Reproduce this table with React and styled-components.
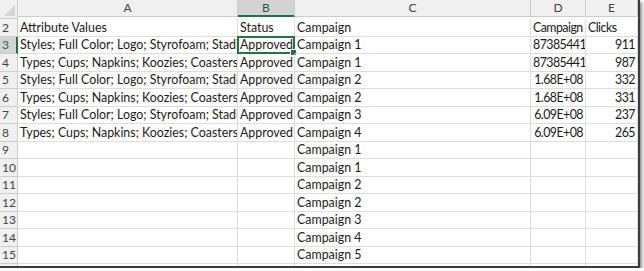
import React from "react";
import styled, { createGlobalStyle } from "styled-components";

const GlobalStyle = createGlobalStyle`
  html, body {
    margin: 0;
    padding: 0;
    background: #ffffff;
  }
  body {
    font-family: Lato, "Open Sans", sans-serif;
  }
`;

const GREEN = "#217346";
const GRID = "#dedede";
const HEAD_BG = "#f0f0f0";
const HEAD_LINE = "#cdcdcd";

const COLUMNS = [
  { key: "A", width: 220 },
  { key: "B", width: 57 },
  { key: "C", width: 236 },
  { key: "D", width: 55, tight: true },
  { key: "E", width: 52, tight: true },
];

const ROWS = [
  { n: 2, h: 18, cells: ["Attribute Values", "Status", "Campaign", "Campaign", "Clicks"], numeric: [] },
  { n: 3, h: 17, cells: ["Styles; Full Color; Logo; Styrofoam; Stadium Cups", "Approved", "Campaign 1", "87385441", "911"], numeric: [3, 4] },
  { n: 4, h: 18, cells: ["Types; Cups; Napkins; Koozies; Coasters; Stadium Cups", "Approved", "Campaign 1", "87385441", "987"], numeric: [3, 4] },
  { n: 5, h: 17, cells: ["Styles; Full Color; Logo; Styrofoam; Stadium Cups", "Approved", "Campaign 2", "1.68E+08", "332"], numeric: [3, 4] },
  { n: 6, h: 18, cells: ["Types; Cups; Napkins; Koozies; Coasters; Stadium Cups", "Approved", "Campaign 2", "1.68E+08", "331"], numeric: [3, 4] },
  { n: 7, h: 17, cells: ["Styles; Full Color; Logo; Styrofoam; Stadium Cups", "Approved", "Campaign 3", "6.09E+08", "237"], numeric: [3, 4] },
  { n: 8, h: 18, cells: ["Types; Cups; Napkins; Koozies; Coasters; Stadium Cups", "Approved", "Campaign 4", "6.09E+08", "265"], numeric: [3, 4] },
  { n: 9, h: 17, cells: ["", "", "Campaign 1", "", ""], numeric: [] },
  { n: 10, h: 18, cells: ["", "", "Campaign 1", "", ""], numeric: [] },
  { n: 11, h: 17, cells: ["", "", "Campaign 2", "", ""], numeric: [] },
  { n: 12, h: 18, cells: ["", "", "Campaign 2", "", ""], numeric: [] },
  { n: 13, h: 17, cells: ["", "", "Campaign 3", "", ""], numeric: [] },
  { n: 14, h: 18, cells: ["", "", "Campaign 4", "", ""], numeric: [] },
  { n: 15, h: 17, cells: ["", "", "Campaign 5", "", ""], numeric: [] },
  { n: 16, h: 18, cells: ["", "", "", "", ""], numeric: [] },
];

const Frame = styled.div`
  width: 638px;
  height: 266px;
  overflow: hidden;
  border-right: 2px solid #3c3c3c;
  border-bottom: 2px solid #3c3c3c;
  box-shadow: 2px 2px 3px rgba(0, 0, 0, 0.45);
  background: #fff;
`;

const Grid = styled.div`
  display: grid;
  grid-template-columns: 18px ${COLUMNS.map((c) => `${c.width}px`).join(" ")};
  grid-auto-rows: min-content;
`;

const Corner = styled.div`
  height: 16px;
  background: ${HEAD_BG};
  border-right: 1px solid ${HEAD_LINE};
  border-bottom: 1px solid ${HEAD_LINE};
  display: flex;
  align-items: flex-end;
  justify-content: flex-end;
  padding: 0 2px 2px 0;
  box-sizing: content-box;
  width: 15px;

  &::after {
    content: "";
    width: 0;
    height: 0;
    border-left: 11px solid transparent;
    border-bottom: 11px solid #d6d6d6;
  }
`;

const ColHead = styled.div`
  height: ${(p) => (p.$active ? 15 : 16)}px;
  background: ${(p) => (p.$active ? "#d3d3d3" : HEAD_BG)};
  border-right: 1px solid ${HEAD_LINE};
  border-bottom: ${(p) => (p.$active ? `2px solid ${GREEN}` : `1px solid ${HEAD_LINE}`)};
  color: ${(p) => (p.$active ? "#1e5b3a" : "#444")};
  font-size: 12px;
  line-height: 16px;
  text-align: center;
`;

const RowHead = styled.div`
  height: ${(p) => p.$h - 1}px;
  background: ${(p) => (p.$active ? "#d3d3d3" : HEAD_BG)};
  border-right: ${(p) => (p.$active ? `2px solid ${GREEN}` : `1px solid ${HEAD_LINE}`)};
  border-bottom: 1px solid ${HEAD_LINE};
  color: ${(p) => (p.$active ? GREEN : "#444")};
  font-size: 12px;
  line-height: ${(p) => p.$h - 1}px;
  padding-left: 2px;
  overflow: hidden;
`;

const Cell = styled.div`
  position: relative;
  height: ${(p) => p.$h - 1}px;
  border-right: 1px solid ${GRID};
  border-bottom: 1px solid ${GRID};
  padding: 0 2px 0 2px;
  font-size: 12.4px;
  line-height: ${(p) => p.$h - 1}px;
  letter-spacing: ${(p) => (p.$tight ? "-0.55px" : "0")};
  color: #1a1a1a;
  white-space: nowrap;
  overflow: ${(p) => (p.$selected ? "visible" : "hidden")};
  text-align: ${(p) => (p.$numeric ? "right" : "left")};
`;

const Selection = styled.div`
  position: absolute;
  left: -1px;
  top: -1px;
  right: -1px;
  bottom: -1px;
  border: 2px solid ${GREEN};
  pointer-events: none;

  &::after {
    content: "";
    position: absolute;
    right: -4px;
    bottom: -4px;
    width: 5px;
    height: 5px;
    background: ${GREEN};
    border: 1px solid #fff;
  }
`;

export default function App() {
  return (
    <>
      <GlobalStyle />
      <Frame>
        <Grid>
          <Corner />
          {COLUMNS.map((c) => (
            <ColHead key={c.key} $active={c.key === "B"}>
              {c.key}
            </ColHead>
          ))}
          {ROWS.map((row) => (
            <React.Fragment key={row.n}>
              <RowHead $h={row.h} $active={row.n === 3}>
                {row.n}
              </RowHead>
              {row.cells.map((text, i) => {
                const selected = row.n === 3 && i === 1;
                return (
                  <Cell
                    key={i}
                    $h={row.h}
                    $numeric={row.numeric.includes(i)}
                    $tight={COLUMNS[i].tight}
                    $selected={selected}
                  >
                    {text}
                    {selected && <Selection />}
                  </Cell>
                );
              })}
            </React.Fragment>
          ))}
        </Grid>
      </Frame>
    </>
  );
}
